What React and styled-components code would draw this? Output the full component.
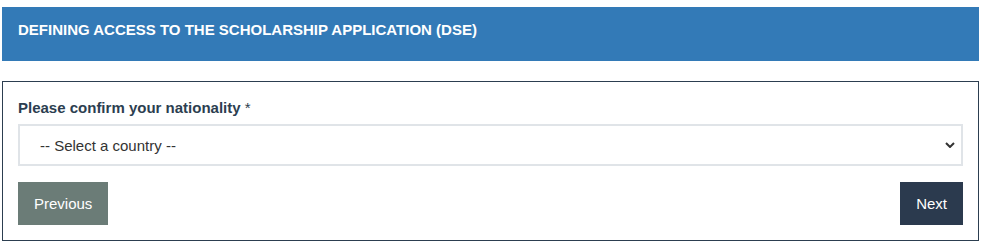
import { createGlobalStyle } from "styled-components";
import styled from "styled-components";

const GlobalStyle = createGlobalStyle`
  body {
    margin: 0;
    background: #ffffff;
    font-family: "Liberation Sans", Arial, sans-serif;
  }
`;

const Page = styled.div`
  padding: 7px 5px 0 2px;
  display: flex;
  flex-direction: column;
  gap: 20px;
`;

const Banner = styled.div`
  background: #337ab7;
  color: #ffffff;
  height: 54px;
  box-sizing: border-box;
  padding: 14px 16px 0;
  font-size: 15px;
  font-weight: bold;
  text-transform: uppercase;
`;

const Card = styled.div`
  border: 1px solid #2c3e50;
  padding: 17px 15px 15px;
  display: flex;
  flex-direction: column;
`;

const Label = styled.label`
  font-size: 15px;
  font-weight: bold;
  color: #2c3e50;
  margin-bottom: 8px;
`;

const Asterisk = styled.span`
  font-weight: normal;
`;

const Select = styled.select`
  appearance: none;
  height: 42px;
  border: 2px solid #e0e4e8;
  border-radius: 0;
  background: #ffffff
    url("data:image/svg+xml,%3Csvg xmlns='http://www.w3.org/2000/svg' width='10' height='6' viewBox='0 0 10 6'%3E%3Cpath d='M1 1l4 4 4-4' fill='none' stroke='%23333' stroke-width='2'/%3E%3C/svg%3E")
    no-repeat right 6px center;
  padding: 0 20px;
  font-family: inherit;
  font-size: 15px;
  color: #333333;
  outline: none;
`;

const Actions = styled.div`
  display: flex;
  justify-content: space-between;
  margin-top: 16px;
`;

const Button = styled.button`
  height: 43px;
  border: none;
  padding: 0 16px;
  background: ${(p) => (p.$dark ? "#2b3a4e" : "#6b7c77")};
  color: #ffffff;
  font-family: inherit;
  font-size: 15px;
  cursor: pointer;
`;

export default function App() {
  return (
    <>
      <GlobalStyle />
      <Page>
        <Banner>Defining access to the scholarship application (DSE)</Banner>
        <Card>
          <Label htmlFor="nationality">
            Please confirm your nationality <Asterisk>*</Asterisk>
          </Label>
          <Select id="nationality" defaultValue="">
            <option value="">-- Select a country --</option>
          </Select>
          <Actions>
            <Button type="button">Previous</Button>
            <Button type="button" $dark>
              Next
            </Button>
          </Actions>
        </Card>
      </Page>
    </>
  );
}
